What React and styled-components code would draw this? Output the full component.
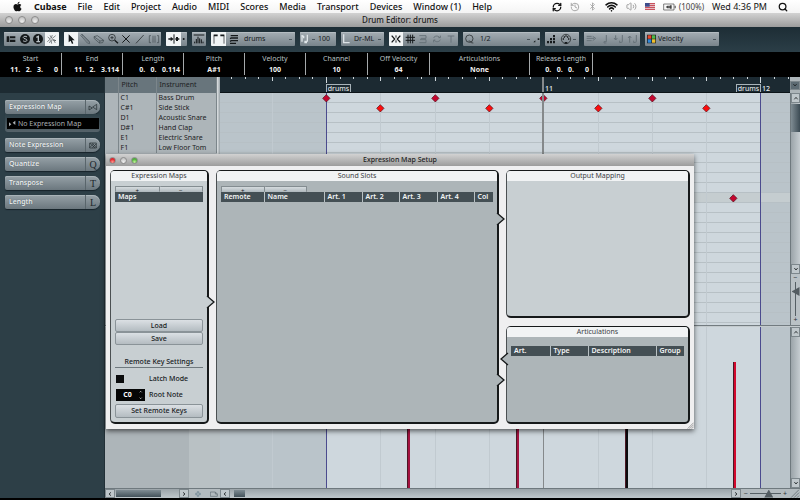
import styled, { createGlobalStyle, css } from "styled-components";
import { RefreshCw, History, Bluetooth, Wifi, Volume2, Search } from "lucide-react";
import { FaApple } from "react-icons/fa";

const GlobalStyle = createGlobalStyle`
  * {
    box-sizing: border-box;
  }
  body {
    margin: 0;
    background: #000;
  }
  body, button, input, select {
    font-family: "Noto Sans", "Open Sans", sans-serif;
    font-size: 7px;
    line-height: 10px;
  }
  button, input, select {
    margin: 0;
    padding: 0;
    border: 0;
    border-radius: 0;
    color: inherit;
    background: none;
    appearance: none;
  }
  svg {
    display: block;
    flex: none;
  }
`;

const Screen = styled.div`
  display: flex;
  flex-direction: column;
  min-height: 100vh;
  padding-bottom: 2px;
  overflow: hidden;
  background: #000;
`;

/* ---------- system menu ---------- */

const MenuBar = styled.nav`
  display: flex;
  align-items: center;
  gap: 11px;
  height: 13px;
  padding: 0 12px;
  color: #111;
  background: linear-gradient(#fff, #f4f4f4);
`;

const MenuItem = styled.button`
  font-size: 9px;
  line-height: 13px;
  white-space: nowrap;
  font-weight: ${(props) => (props.$strong ? 700 : 500)};
`;

const MenuStatus = styled.div`
  display: flex;
  align-items: center;
  gap: 8px;
  margin-left: auto;
  font-size: 9px;
  line-height: 13px;
  white-space: nowrap;
`;

const Battery = styled.span`
  display: flex;
  align-items: center;
  gap: 3px;
  font-size: 8px;
  color: #444;
`;

const TitleBar = styled.header`
  display: grid;
  grid-template-columns: 1fr auto 1fr;
  align-items: center;
  height: ${(props) => (props.$small ? 12 : 14)}px;
  padding: 0 ${(props) => (props.$small ? 3 : 5)}px;
  font-size: ${(props) => (props.$small ? 7 : 8)}px;
  font-weight: 500;
  color: #222;
  background: linear-gradient(#d2d2d2, #9c9c9c);
`;

const Lights = styled.div`
  display: flex;
  gap: ${(props) => (props.$small ? 4 : 5)}px;
`;

const lightColors = {
  red: "radial-gradient(circle at 50% 80%, #ff9a90, #e0252c 60%)",
  green: "radial-gradient(circle at 50% 80%, #c5f59a, #4fae3c 60%)",
  gray: "radial-gradient(circle at 50% 80%, #eee, #c6c6c6 70%)",
};

const Light = styled.button`
  width: ${(props) => (props.$small ? 7 : 8)}px;
  height: ${(props) => (props.$small ? 7 : 8)}px;
  border: 1px solid #8b8b8b;
  border-radius: 50%;
  background: ${(props) => lightColors[props.$color]};
`;

/* ---------- toolbar ---------- */

const Toolbar = styled.div`
  display: flex;
  gap: 5px;
  height: 25px;
  padding: 5px 4px 6px;
  background: linear-gradient(#1d2d35, #2b3e47);
`;

const ToolGroup = styled.div`
  display: flex;
  align-items: center;
  flex: none;
  width: ${(props) => props.$width}px;
  height: 14px;
  color: #15191b;
  border-radius: 1px;
  background: linear-gradient(#a4adb3, #79848b);
  box-shadow: inset 0 1px 0 #b4bcc1;
  overflow: hidden;
`;

const Tool = styled.button`
  display: flex;
  align-items: center;
  justify-content: center;
  flex: 1 1 0;
  height: 14px;
  color: ${(props) => (props.$dim ? "#68737a" : "#15191b")};
  ${(props) =>
    props.$on &&
    css`
      background: #f1f4f5;
    `}
`;

const ToolSelect = styled.select`
  flex: 1;
  min-width: 0;
  height: 14px;
  padding-left: 3px;
  line-height: 14px;
  color: #15191b;
`;

const Caret = styled.span`
  width: 3px;
  height: 1px;
  margin-right: 3px;
  background: #4a555c;
`;

/* ---------- info line ---------- */

const InfoLine = styled.dl`
  display: flex;
  height: 25px;
  margin: 0;
  padding: 1px 0 2px;
  background: #000;
`;

const InfoCell = styled.div`
  display: flex;
  flex-direction: column;
  width: ${(props) => props.$width}px;
  padding: 0 3px;
  border-right: 1px solid #a5a9ab;
  text-align: center;
  dt {
    line-height: 11px;
    color: #b9c0c4;
  }
  dd {
    margin: 0;
    line-height: 12px;
    font-weight: 700;
    color: #f2f2f2;
    white-space: pre;
    text-align: ${(props) => (props.$right ? "right" : "center")};
  }
`;

/* ---------- inspector ---------- */

const Main = styled.main`
  display: grid;
  grid-template-columns: 105px minmax(0, 1fr);
  flex: 1;
`;

const Inspector = styled.aside`
  display: flex;
  flex-direction: column;
  gap: 5px;
  padding: 23px 4px 0 5px;
  background: linear-gradient(#1d2b32 16px, #2d3f47 16px);
  border-right: 1px solid #223037;
`;

const Section = styled.button`
  display: flex;
  align-items: center;
  justify-content: space-between;
  width: 100%;
  height: 14px;
  padding: 0 0 0 4px;
  color: #f2f5f6;
  font-weight: 500;
  text-shadow: 0 0 1px #48545a;
  border-radius: 2px 7px 7px 2px;
  background: linear-gradient(#96a1a7, #6b777e);
  box-shadow: inset 0 1px 0 #a9b3b8, 0 1px 1px #17232a;
`;

const SectionIcon = styled.span`
  display: flex;
  align-items: center;
  justify-content: center;
  width: 15px;
  height: 14px;
  font: 10px "Liberation Serif", serif;
  color: #20282c;
  text-shadow: none;
  border-left: 1px solid #59656b;
`;

const SectionBody = styled.div`
  margin-bottom: 1px;
  padding: 4px 1px 3px 2px;
  border-radius: 0 0 3px 3px;
  background: linear-gradient(#2d3f47, #56636a);
`;

const MapName = styled.button`
  display: flex;
  align-items: center;
  width: 100%;
  height: 11px;
  padding-left: 1px;
  color: #a9aeb1;
  background: #000;
`;

/* ---------- editor ---------- */

const Editor = styled.section`
  position: relative;
  display: grid;
  grid-template-columns: 112px 3px minmax(0, 1fr) 10px;
  grid-template-rows: 16px minmax(232px, 1fr) 2px 161px 10px;
  background: #adb5b9;
`;

const DrumTable = styled.table`
  grid-column: 1;
  grid-row: 1 / 3;
  align-self: start;
  width: 100%;
  table-layout: fixed;
  border-collapse: collapse;
  color: #1c2123;
  th, td {
    height: 10px;
    padding: 0 0 0 2px;
    line-height: 10px;
    text-align: left;
    font-weight: 400;
    white-space: nowrap;
    border-right: 1px solid #7c868b;
  }
  th {
    height: 16px;
    padding-left: 3px;
    background: #68757c;
  }
`;

const Splitter = styled.div`
  grid-column: 2;
  grid-row: 1 / 3;
  background: linear-gradient(90deg, #dfe3e5, #99a2a7);
`;

const Ruler = styled.div`
  position: relative;
  grid-column: 3;
  grid-row: 1;
  overflow: hidden;
  background: #1c2a32;
  border-bottom: 1px solid #0c1418;
`;

const Mark = styled.span`
  position: absolute;
  bottom: -2px;
  font-weight: 500;
  color: #eef2f4;
`;

const PartTag = styled.span`
  position: absolute;
  bottom: -1px;
  width: 25px;
  height: 9px;
  line-height: 8px;
  text-align: center;
  color: #f1f4f5;
  border: 1px solid #a8b3b9;
  border-bottom: 0;
`;

const Tick = styled.i`
  position: absolute;
  top: 0;
  width: 1px;
  height: ${(props) => props.$size}px;
  background: #cfd6da;
`;

const Canvas = styled.div`
  position: relative;
  grid-column: 3;
  grid-row: ${(props) => props.$row};
  overflow: hidden;
  background: #bac4ca;
`;

const PartArea = styled.div`
  position: absolute;
  top: 0;
  bottom: 0;
  border: solid #4b4b8e;
  border-width: 0 1px;
  background: #ced7dd;
`;

const RowLines = styled.div`
  position: absolute;
  inset: 0;
  background: repeating-linear-gradient(transparent 0 9px, #b7c0c5 9px 10px);
`;

const RowHighlight = styled.div`
  position: absolute;
  top: 100px;
  width: 100%;
  height: 10px;
  background: #c5cdd0;
`;

const BeatLine = styled.i`
  position: absolute;
  top: 0;
  bottom: 0;
  width: 1px;
  background: #c1cad0;
`;

const Playhead = styled.i`
  position: absolute;
  top: 0;
  bottom: 0;
  width: ${(props) => (props.$thin ? 1 : 2)}px;
  background: #85898b;
`;

const Note = styled.svg`
  position: absolute;
  width: 9px;
  height: 9px;
`;

const VelocityBar = styled.i`
  position: absolute;
  bottom: 0;
  width: 3px;
  height: 126px;
  border-left: 1px solid #4b1724;
  background: ${(props) => props.$color};
`;

const Column = styled.div`
  grid-column: 4;
  grid-row: ${(props) => props.$row};
  display: flex;
  flex-direction: column;
  background: #b9c1c5;
  border-left: 1px solid #6f797e;
`;

const Track = styled.div`
  display: flex;
  flex-direction: ${(props) => (props.$vertical ? "column" : "row")};
  align-self: stretch;
  flex: 1;
  background: ${(props) =>
    props.$vertical
      ? "linear-gradient(90deg, #9ba4a9, #c5ccd0)"
      : "linear-gradient(#9ba4a9, #bfc7cb)"};
`;

const Thumb = styled.div`
  ${(props) =>
    props.$vertical
      ? css`
          height: ${props.$size}px;
          margin-top: 1px;
          background: linear-gradient(90deg, #7f8c93, #3c4b54);
        `
      : css`
          width: ${props.$size}px;
          margin: 1px 0 1px ${props.$offset || 0}px;
          background: linear-gradient(#7f8c93, #43525a);
        `}
`;

const ArrowButton = styled.button`
  display: flex;
  align-items: center;
  justify-content: center;
  flex: none;
  width: ${(props) => (props.$wide ? 10 : 9)}px;
  height: ${(props) => (props.$wide ? 9 : 10)}px;
  color: #1c2123;
  border: 1px solid #7d878c;
  background: #bfc7cb;
`;

const RulerMenu = styled(ArrowButton)`
  grid-column: 4;
  grid-row: 1;
  width: 10px;
  height: 9px;
  align-self: center;
  background: #5d6b73;
`;

const LaneDivider = styled.div`
  grid-column: 1 / 5;
  grid-row: 3;
  background: #727b80;
  border-bottom: 1px solid #c3cacd;
`;

const LaneHead = styled.div`
  grid-column: 1 / 3;
  grid-row: 4;
  background: linear-gradient(90deg, #adb5b9 84px, #b9c1c4 84px);
`;

const BottomBar = styled.div`
  grid-column: 1 / 5;
  grid-row: 5;
  display: flex;
  align-items: center;
  border-top: 1px solid #6f797e;
  background: #b3bbbf;
`;

const ListScroll = styled.div`
  display: flex;
  width: 84px;
  height: 9px;
`;

const BottomIcons = styled.div`
  display: flex;
  align-items: center;
  justify-content: space-between;
  width: 31px;
  padding: 0 2px 0 6px;
`;

const ZoomBox = styled.div`
  display: flex;
  align-items: center;
  gap: 2px;
  line-height: 8px;
  color: #2b3337;
  ${(props) =>
    props.$vertical
      ? css`
          flex-direction: column;
          height: 51px;
          gap: 0;
        `
      : css`
          width: 49px;
          padding: 0 3px;
        `}
`;

const ZoomSlider = styled.input`
  ${(props) =>
    props.$vertical
      ? css`
          width: 9px;
          height: 34px;
          writing-mode: vertical-lr;
          background: linear-gradient(#555f64, #555f64) center / 1px 100% no-repeat;
        `
      : css`
          flex: 1;
          min-width: 0;
          height: 9px;
          background: linear-gradient(#555f64, #555f64) center / 100% 1px no-repeat;
        `}
  &::-webkit-slider-thumb {
    appearance: none;
    width: ${(props) => (props.$vertical ? 8 : 9)}px;
    height: ${(props) => (props.$vertical ? 9 : 8)}px;
    background: #535c61;
    clip-path: ${(props) =>
      props.$vertical
        ? "polygon(0 50%, 100% 0, 100% 100%)"
        : "polygon(50% 0, 100% 100%, 0 100%)"};
  }
`;

/* ---------- expression map window ---------- */

const Dialog = styled.section`
  position: absolute;
  top: 77px;
  left: 1px;
  right: 106px;
  color: #15191b;
  background: #efeff0;
  box-shadow: 0 2px 5px rgba(0, 0, 0, 0.6);
`;

const DialogBody = styled.div`
  display: grid;
  grid-template-columns: 99px minmax(0, 1fr) 184px;
  grid-template-rows: 148px 98px;
  gap: 8px 7px;
  padding: 4px 4px 5px;
`;

const Panel = styled.section`
  position: relative;
  display: flex;
  flex-direction: column;
  grid-row: ${(props) => (props.$tall ? "1 / 3" : "auto")};
  border: 2px solid #16191a;
  border-left-color: #4b5052;
  border-left-width: 1px;
  border-top-width: 1px;
  border-radius: 5px;
  background: ${(props) => (props.$light ? "#c8cfd2" : "#adb5b8")};
  h2 {
    margin: 0 0 ${(props) => (props.$flush ? 9 : 5)}px;
    font-size: 7px;
    font-weight: 400;
    line-height: 10px;
    text-align: center;
    color: #3c4144;
    border-radius: 3px 3px 0 0;
    background: #f1f3f4;
  }
`;

const Pointer = styled.svg`
  position: absolute;
  top: ${(props) => props.$top}px;
  ${(props) => (props.$left ? "left: -7px;" : "right: -8px;")}
  width: 8px;
  height: 12px;
  overflow: visible;
`;

const AddRemove = styled.div`
  display: flex;
  width: ${(props) => props.$width}px;
  margin-left: 4px;
`;

const SmallButton = styled.button`
  flex: 1;
  height: 6px;
  font: 6px "Liberation Sans", sans-serif;
  line-height: 4px;
  border: 1px solid #848d91;
  border-bottom: 0;
  border-radius: 1px;
  background: linear-gradient(#d5dbde, #aeb7bc);
  & + & {
    border-left: 0;
  }
`;

const SlotTable = styled.table`
  width: ${(props) => props.$width}px;
  margin-left: 4px;
  table-layout: fixed;
  border-collapse: collapse;
  th {
    height: 10px;
    padding: 0 0 0 3px;
    line-height: 10px;
    text-align: left;
    font-weight: 600;
    white-space: nowrap;
    color: #f3f5f6;
    background: #444f54;
    border-right: 1px solid #b9c1c4;
  }
  th:last-child {
    border-right: 0;
  }
`;

const MapActions = styled.div`
  display: flex;
  flex-direction: column;
  margin: auto 4px 4px;
`;

const WideButton = styled.button`
  height: ${(props) => (props.$big ? 14 : 13)}px;
  font-weight: 500;
  border: 1px solid #8a9398;
  border-radius: 2px;
  background: linear-gradient(#dbe0e4, #b4bcc1);
`;

const SettingsTitle = styled.h3`
  margin: 12px 0 5px;
  font-size: 7px;
  font-weight: 500;
  line-height: 10px;
  text-align: center;
  border-bottom: 1px solid #6f797e;
`;

const Setting = styled.div`
  display: grid;
  grid-template-columns: 34px 1fr;
  align-items: center;
  height: ${(props) => props.$height}px;
  font-weight: 500;
`;

const LatchBox = styled.input`
  width: 8px;
  height: 8px;
  margin-left: 1px;
  background: #0a0c0d;
`;

const NoteField = styled.span`
  display: flex;
  align-items: center;
  width: 29px;
  height: 12px;
  margin-left: 1px;
  color: #fff;
  background: #050606;
  input {
    width: 23px;
    text-align: center;
    font-weight: 700;
    color: #fff;
  }
`;

const Grip = styled.svg`
  position: absolute;
  right: 0;
  bottom: 0;
`;

/* ---------- drawings ---------- */

// glyphs are drawn on a grid of three units per pixel
const Glyph = ({ w = 12, h = 12, stroke = 3, children }) => (
  <svg
    width={w}
    height={h}
    viewBox={`0 0 ${w * 3} ${h * 3}`}
    fill="none"
    stroke="currentColor"
    strokeWidth={stroke}
    aria-hidden="true"
  >
    {children}
  </svg>
);

const Arrow = ({ dir }) => {
  const d = {
    up: "M4 13l5-6 5 6",
    down: "M4 6l5 6 5-6",
    left: "M12 4l-6 5 6 5",
    right: "M6 4l6 5-6 5",
  };
  return (
    <Glyph w={6} h={6} stroke={2.5}>
      <path d={d[dir]} />
    </Glyph>
  );
};

const fillOnly = { fill: "currentColor", stroke: "none" };

const ICONS = {
  info: <path {...fillOnly} d="M5 10h8v17H5zM15 10h16v6H15zM15 20h16v7H15z" />,
  solo: (
    <>
      <circle {...fillOnly} cx="18" cy="18" r="15" />
      <path stroke="#bac2c7" d="M24 12c-4-4-12-2-11 2s10 3 11 7-8 6-12 2" />
    </>
  ),
  feedback: (
    <>
      <circle {...fillOnly} cx="18" cy="18" r="15" />
      <path stroke="#bac2c7" strokeWidth="4" d="M13 13l6-3v17M13 26h11" />
    </>
  ),
  spark: <path stroke="#4c5254" strokeWidth="2" d="M5 12l8 6-9 8M15 17l4-11M18 17l11-9M17 20l13 3-8-3 6 10M15 20l2 12M12 7l4 8M10 30l5-8" />,
  pointer: <path {...fillOnly} d="M11 4v24l6-5 4 10 4-2-4-9h8z" />,
  pencil: <path stroke="#4a545a" strokeWidth="2" d="M5 7l4-4 22 22 1 7-7-2zM8 10l4-4M10 8l20 20" />,
  eraser: <path stroke="#3d474c" strokeWidth="2" d="M3 11l10-3 19 14-3 7-10 1L4 17zM3 11l18 13 11-2M21 24l-2 6" />,
  zoom: (
    <>
      <circle cx="15" cy="14" r="10" strokeWidth="2" />
      <path strokeWidth="2" d="M15 9v10M10 14h10" />
      <path strokeWidth="4" d="M23 22l10 9" />
    </>
  ),
  mute: <path strokeWidth="3" d="M7 7l22 22M29 7L7 29" />,
  line: <path strokeWidth="2" d="M6 31L29 6" />,
  warp: <path stroke="#3d474c" strokeWidth="2" d="M9 8H4v21h5M15 8v21M21 8v21M27 8h5v21h-5" />,
  scroll: (
    <>
      <path strokeWidth="3" d="M18 4v28" />
      <path strokeWidth="5" d="M1 18h8M22 18h12" />
      <path {...fillOnly} d="M8 11l9 7-9 7zM24 12h6v12h-6z" />
    </>
  ),
  bars: <path strokeWidth="3" d="M2 6h32M5 31v-5M10 31v-13M15 31v-20M20 31v-15M25 31v-12M30 31v-5" />,
  part: (
    <>
      <path strokeWidth="2" d="M3 32V8M33 32V8" />
      <path strokeWidth="5" d="M2 7h12M22 7h12" />
    </>
  ),
  layers: <path strokeWidth="4" d="M8 8h22M6 17l4-2h20M6 25l4-2h20M6 31h18" />,
  noteVel: <path stroke="#dfe5e8" strokeWidth="4" d="M6 6v20M6 8l5 2v6M22 5v21M21 25h-6v4h6" />,
  length: <path stroke="#dde3e6" strokeWidth="4" d="M8 4v25h18" />,
  snap: (
    <>
      <path strokeWidth="4" d="M5 8l9 10-9 10M31 8l-9 10 9 10" />
      <path strokeWidth="3" d="M18 7v7M18 22v7" />
    </>
  ),
  grid: <path strokeWidth="3" d="M12 5v26M19 5v26M26 5v26M5 13h28M5 22h28" />,
  snapType: <path strokeWidth="3" d="M7 8h20v8H11M9 20h18v9H7" />,
  loop: <path strokeWidth="3" d="M8 15c2-7 14-8 18-1M28 20c-3 8-15 8-19 1M22 14h6V8M13 21H8v7" />,
  tee: <path strokeWidth="3" d="M8 9h20M18 9v20" />,
  steps: <path {...fillOnly} d="M3 24h6v7H3zM12 24h6v7h-6zM12 15h6v7h-6zM21 24h6v7h-6zM21 15h6v7h-6zM21 6h6v7h-6z" />,
  midi: (
    <>
      <circle cx="18" cy="18" r="14" strokeWidth="2" />
      <path {...fillOnly} d="M8 16h4v4H8zM24 16h4v4h-4zM11 10h4v4h-4zM21 10h4v4h-4zM16 7h4v4h-4zM14 27h8v5h-8z" />
    </>
  ),
  step: <path strokeWidth="3" d="M5 10h15M5 16h22M23 10l9 6-9 7M5 23h15" />,
  quarter: <path strokeWidth="3" d="M22 6v20h-7v4h7" />,
  noteDown: <path strokeWidth="3" d="M8 7v14M3 15l5 6 5-6M28 6v20M28 27l-8 2v-6" />,
  noteUp: <path strokeWidth="3" d="M8 29V9M3 15l5-6 5 6M28 6v20M28 27l-8 2v-6" />,
};

const Icon = ({ name }) => <Glyph>{ICONS[name]}</Glyph>;

const MapIcon = () => (
  <Glyph w={10} h={8} stroke={2}>
    <path d="M3 21V9l10 6zM26 4v16L14 12z" />
  </Glyph>
);

const SlotIcon = () => (
  <Glyph w={10} h={9}>
    <path {...fillOnly} d="M3 22V10l7 6zM22 5v13l-8-7z" />
  </Glyph>
);

const Diamond = ({ x, y, color }) => (
  <Note style={{ left: x - 4, top: y - 4 }} viewBox="0 0 27 27">
    <path d="M13 2l11 11-11 11L2 13z" fill={color} stroke="#4d0b16" strokeWidth="2" />
  </Note>
);

const Point = ({ top, left, fill }) => (
  <Pointer $top={top} $left={left} viewBox="0 0 8 12">
    <path
      d={left ? "M8 0L1 6l7 6" : "M0 0l7 6-7 6"}
      fill={fill}
      stroke="#16191a"
      strokeWidth="1.3"
    />
  </Pointer>
);

/* ---------- data ---------- */

const MENUS = ["File", "Edit", "Project", "Audio", "MIDI", "Scores", "Media", "Transport", "Devices", "Window (1)", "Help"];

const INFO = [
  { label: "Start", value: "11.   2.   3.      0", width: 62, right: true },
  { label: "End", value: "11.   2.   3.114", width: 61, right: true },
  { label: "Length", value: "0.   0.   0.114", width: 61, right: true },
  { label: "Pitch", value: "A#1", width: 61 },
  { label: "Velocity", value: "100", width: 61 },
  { label: "Channel", value: "10", width: 62 },
  { label: "Off Velocity", value: "64", width: 62 },
  { label: "Articulations", value: "None", width: 100 },
  { label: "Release Length", value: "0.   0.   0.      0", width: 63, right: true },
];

const DRUMS = [
  ["C1", "Bass Drum"],
  ["C#1", "Side Stick"],
  ["D1", "Acoustic Snare"],
  ["D#1", "Hand Clap"],
  ["E1", "Electric Snare"],
  ["F1", "Low Floor Tom"],
];

const DARK = "#c4062f";
const BRIGHT = "#fb0d0d";

// beat is counted in eighths from the start of the part
const NOTES = [
  [0, 0, DARK], [4, 0, DARK], [8, 0, DARK], [12, 0, DARK],
  [2, 1, BRIGHT], [6, 1, BRIGHT], [10, 1, BRIGHT], [14, 1, BRIGHT],
  [1, 6, DARK], [5, 6, DARK], [9, 6, DARK], [13, 6, DARK],
  [15, 10, DARK],
];

const VELOCITIES = [
  [3, "#a3123f"],
  [7, "#a3123f"],
  [11, "#0b0b0d"],
  [15, "#d3082d"],
];

const PART_START = 106;
const xOf = (eighth) => Math.round(PART_START + eighth * 27.15);
const partStyle = { left: xOf(0), width: xOf(16) - xOf(0) + 1 };

const SLOTS = [["Remote", 43], ["Name", 60], ["Art. 1", 38], ["Art. 2", 37], ["Art. 3", 38], ["Art. 4", 37], ["Col", 19]];
const ARTS = [["Art.", 39], ["Type", 38], ["Description", 68], ["Group", 28]];

const HeadTable = ({ columns }) => (
  <SlotTable $width={columns.reduce((sum, c) => sum + c[1], 0)}>
    <colgroup>
      {columns.map(([name, width]) => (
        <col key={name} style={{ width }} />
      ))}
    </colgroup>
    <thead>
      <tr>
        {columns.map(([name]) => (
          <th key={name}>{name}</th>
        ))}
      </tr>
    </thead>
  </SlotTable>
);

const WindowLights = ({ colors, small }) => (
  <Lights $small={small}>
    {colors.map((color, i) => (
      <Light key={i} $small={small} $color={color} aria-label={["Close", "Minimize", "Zoom"][i]} />
    ))}
  </Lights>
);

const Tools = ({ names, on = [], dim = [] }) =>
  names.map((name) => (
    <Tool key={name} $on={on.includes(name)} $dim={dim.includes(name)} aria-label={name}>
      <Icon name={name} />
    </Tool>
  ));

const SystemMenu = () => (
  <MenuBar>
    <FaApple size={11} />
    <MenuItem $strong>Cubase</MenuItem>
    {MENUS.map((name) => (
      <MenuItem key={name}>{name}</MenuItem>
    ))}
    <MenuStatus>
      <RefreshCw size={10} strokeWidth={3} />
      <History size={10} color="#999" />
      <Bluetooth size={9} color="#999" />
      <Wifi size={13} strokeWidth={3} />
      <Volume2 size={11} color="#999" />
      <svg width="10" height="7" viewBox="0 0 30 21">
        <path fill="#e9d6da" d="M0 0h30v21H0z" />
        <path stroke="#c33a48" strokeWidth="3" d="M0 2h30M0 8h30M0 14h30M0 20h30" />
        <path fill="#3c4c8c" d="M0 0h14v11H0z" />
      </svg>
      <Battery>
        <Glyph w={13} h={8} stroke={2}>
          <path d="M2 3h31v18H2z" />
          <path {...fillOnly} d="M35 8h3v8h-3zM8 12l8-5v3h4V7h6v10h-6v-3h-4v3z" />
        </Glyph>
        (100%)
      </Battery>
      <span>Wed 4:36 PM</span>
      <Search size={10} strokeWidth={3} style={{ marginLeft: 3 }} />
    </MenuStatus>
  </MenuBar>
);

const MainToolbar = () => (
  <Toolbar>
    <ToolGroup $width={55}>
      <Tools names={["info", "solo", "feedback", "spark"]} on={["spark"]} />
    </ToolGroup>
    <ToolGroup $width={97}>
      <Tools names={["pointer", "pencil", "eraser", "zoom", "mute", "line", "warp"]} on={["pointer"]} />
    </ToolGroup>
    <ToolGroup $width={21}>
      <Tools names={["scroll"]} on={["scroll"]} />
      <Glyph w={6}>
        <circle {...fillOnly} cx="8" cy="18" r="3" />
      </Glyph>
    </ToolGroup>
    <ToolGroup $width={14}>
      <Tools names={["bars"]} />
    </ToolGroup>
    <ToolGroup $width={84}>
      <Tools names={["part"]} on={["part"]} />
      <Tools names={["layers"]} />
      <ToolSelect aria-label="Part" style={{ flexGrow: 3 }}>
        <option>drums</option>
      </ToolSelect>
      <Caret />
    </ToolGroup>
    <ToolGroup $width={36}>
      <Icon name="noteVel" />
      <Caret />
      <span>100</span>
    </ToolGroup>
    <ToolGroup $width={43}>
      <Icon name="length" />
      <ToolSelect aria-label="Drum map length" style={{ paddingLeft: 1 }}>
        <option>Dr-ML</option>
      </ToolSelect>
      <Caret />
    </ToolGroup>
    <ToolGroup $width={69}>
      <Tools names={["snap", "grid", "snapType", "loop", "tee"]} on={["snap"]} dim={["snapType", "loop", "tee"]} />
    </ToolGroup>
    <ToolGroup $width={77}>
      <Glyph w={14}>
        <circle cx="19" cy="17" r="11" strokeWidth="2" />
        <path strokeWidth="2" d="M17 24c4-2 6 7 14 6" />
      </Glyph>
      <ToolSelect aria-label="Quantize">
        <option>1/2</option>
      </ToolSelect>
      <Caret />
      <Glyph w={7}>
        <path {...fillOnly} d="M1 28l6-6v6zM14 16h5v5h-5z" />
      </Glyph>
    </ToolGroup>
    <ToolGroup $width={34}>
      <Tools names={["steps", "midi"]} />
      <Caret />
    </ToolGroup>
    <ToolGroup $width={56}>
      <Tools names={["step", "quarter", "noteDown", "noteUp"]} dim={["step", "quarter", "noteDown", "noteUp"]} />
    </ToolGroup>
    <ToolGroup $width={74}>
      <Glyph w={12}>
        <path {...fillOnly} d="M6 5h27v26H6z" />
        <path stroke="none" fill="#e8472b" d="M8 7h11v10H8z" />
        <path stroke="none" fill="#4fb84a" d="M21 7h10v10H21z" />
        <path stroke="none" fill="#2f87d8" d="M8 19h11v10H8z" />
        <path stroke="none" fill="#f0c02c" d="M21 19h10v10H21z" />
      </Glyph>
      <ToolSelect aria-label="Event colors" style={{ paddingLeft: 1 }}>
        <option>Velocity</option>
      </ToolSelect>
      <Caret />
    </ToolGroup>
  </Toolbar>
);

const SideSection = ({ label, children }) => (
  <Section>
    {label}
    <SectionIcon>{children}</SectionIcon>
  </Section>
);

const InspectorPanel = () => (
  <Inspector>
    <div>
      <SideSection label="Expression Map">
        <MapIcon />
      </SideSection>
      <SectionBody>
        <MapName>
          <SlotIcon />
          No Expression Map
        </MapName>
      </SectionBody>
    </div>
    <SideSection label="Note Expression">
      <Glyph w={8} h={7} stroke={2}>
        <path d="M2 3h20v15H2zM3 4l15 14M10 4l11 12M3 16L14 5M10 17L21 6" />
      </Glyph>
    </SideSection>
    <SideSection label="Quantize">Q</SideSection>
    <SideSection label="Transpose">T</SideSection>
    <SideSection label="Length">L</SideSection>
  </Inspector>
);

const TimeRuler = () => (
  <Ruler>
    {Array.from({ length: 43 }, (_, i) => i - 8).map((i) => (
      <Tick
        key={i}
        $size={i % 16 === 0 ? 6 : i % 4 === 0 ? 4 : 2}
        style={{ left: xOf(i / 2) }}
      />
    ))}
    <PartTag style={{ left: xOf(0) }}>drums</PartTag>
    <Mark style={{ left: xOf(8) + 2 }}>11</Mark>
    <PartTag style={{ left: xOf(16) - 24 }}>drums</PartTag>
    <Mark style={{ left: xOf(16) + 2 }}>12</Mark>
    <Playhead style={{ left: xOf(8) - 1 }} />
  </Ruler>
);

const BeatLines = () =>
  [-2, 2, 4, 6, 10, 12, 14].map((e) => <BeatLine key={e} style={{ left: xOf(e) }} />);

const ExpressionMapSetup = () => (
  <Dialog aria-label="Expression Map Setup">
    <TitleBar $small>
      <WindowLights small colors={["red", "gray", "green"]} />
      <span>Expression Map Setup</span>
    </TitleBar>
    <DialogBody>
      <Panel $tall $light>
        <h2>Expression Maps</h2>
        <AddRemove $width={88}>
          <SmallButton>+</SmallButton>
          <SmallButton>−</SmallButton>
        </AddRemove>
        <HeadTable columns={[["Maps", 88]]} />
        <MapActions>
          <WideButton>Load</WideButton>
          <WideButton>Save</WideButton>
          <SettingsTitle>Remote Key Settings</SettingsTitle>
          <Setting $height={12}>
            <LatchBox type="checkbox" id="latch" />
            <label htmlFor="latch">Latch Mode</label>
          </Setting>
          <Setting $height={19}>
            <NoteField>
              <input id="root-note" defaultValue="C0" />
              <Glyph w={4} h={10} stroke={2}>
                <path d="M2 7l3-3 3 3M2 23l3 3 3-3" />
              </Glyph>
            </NoteField>
            <label htmlFor="root-note">Root Note</label>
          </Setting>
          <WideButton $big>Set Remote Keys</WideButton>
        </MapActions>
        <Point top={125} fill="#c8cfd2" />
      </Panel>
      <Panel $tall>
        <h2>Sound Slots</h2>
        <AddRemove $width={86}>
          <SmallButton>+</SmallButton>
          <SmallButton>−</SmallButton>
        </AddRemove>
        <HeadTable columns={SLOTS} />
        <Point top={42} fill="#adb5b8" />
        <Point top={203} fill="#adb5b8" />
      </Panel>
      <Panel $light>
        <h2>Output Mapping</h2>
      </Panel>
      <Panel $flush>
        <h2>Articulations</h2>
        <HeadTable columns={ARTS} />
        <Point left top={26} fill="#adb5b8" />
      </Panel>
    </DialogBody>
    <Grip width="7" height="7" viewBox="0 0 21 21">
      <path d="M2 20L20 2M8 20L20 8M14 20l6-6" stroke="#777" strokeWidth="2" />
    </Grip>
  </Dialog>
);

const DrumEditor = () => (
  <Editor>
    <DrumTable>
      <colgroup>
        <col style={{ width: 13 }} />
        <col style={{ width: 38 }} />
        <col />
      </colgroup>
      <thead>
        <tr>
          <th aria-label="Audition" />
          <th>Pitch</th>
          <th>Instrument</th>
        </tr>
      </thead>
      <tbody>
        {DRUMS.map(([pitch, name]) => (
          <tr key={pitch}>
            <td />
            <td>{pitch}</td>
            <td>{name}</td>
          </tr>
        ))}
      </tbody>
    </DrumTable>
    <Splitter />
    <TimeRuler />
    <RulerMenu aria-label="Ruler format">
      <Arrow dir="down" />
    </RulerMenu>

    <Canvas $row={2}>
      <PartArea style={partStyle} />
      <RowHighlight />
      <RowLines />
      <BeatLines />
      <PartArea style={{ ...partStyle, background: "none" }} />
      {NOTES.map(([eighth, row, color]) => (
        <Diamond key={`${eighth}-${row}`} x={xOf(eighth)} y={row * 10 + 5} color={color} />
      ))}
      <Playhead style={{ left: xOf(8) - 1 }} />
    </Canvas>
    <Column $row={2}>
      <ArrowButton aria-label="Scroll up">
        <Arrow dir="up" />
      </ArrowButton>
      <Track $vertical>
        <Thumb $vertical $size={28} />
      </Track>
      <ArrowButton aria-label="Scroll down">
        <Arrow dir="down" />
      </ArrowButton>
      <ZoomBox $vertical>
        −
        <ZoomSlider $vertical type="range" defaultValue="20" aria-label="Vertical zoom" />
        +
      </ZoomBox>
    </Column>

    <LaneDivider />
    <LaneHead />
    <Canvas $row={4}>
      <PartArea style={partStyle} />
      <BeatLines />
      {VELOCITIES.map(([eighth, color]) => (
        <VelocityBar key={eighth} $color={color} style={{ left: xOf(eighth) }} />
      ))}
      <Playhead $thin style={{ left: xOf(8) }} />
    </Canvas>
    <Column $row={4}>
      <ArrowButton aria-label="Lane up">
        <Arrow dir="up" />
      </ArrowButton>
      <Track $vertical />
      <ArrowButton aria-label="Lane down">
        <Arrow dir="down" />
      </ArrowButton>
    </Column>

    <BottomBar>
      <ListScroll>
        <ArrowButton $wide aria-label="List left">
          <Arrow dir="left" />
        </ArrowButton>
        <Track>
          <Thumb $size={45} $offset={1} />
        </Track>
        <ArrowButton $wide aria-label="List right">
          <Arrow dir="right" />
        </ArrowButton>
      </ListScroll>
      <BottomIcons>
        <Glyph w={6} h={6} stroke={2}>
          <path stroke="#66808e" d="M7 2h4v5h5v4h-5v5H7v-5H2V7h5z" />
        </Glyph>
        <Glyph w={8} h={6} stroke={2}>
          <path stroke="#5d6a71" d="M1 3h15l6 6v7H1zM16 3v6h6" />
        </Glyph>
      </BottomIcons>
      <ArrowButton $wide aria-label="Scroll left">
        <Arrow dir="left" />
      </ArrowButton>
      <Track>
        <Thumb $size={11} $offset={4} />
      </Track>
      <ArrowButton $wide aria-label="Scroll right">
        <Arrow dir="right" />
      </ArrowButton>
      <ZoomBox>
        −
        <ZoomSlider type="range" defaultValue="65" aria-label="Horizontal zoom" />
        +
      </ZoomBox>
      <Glyph w={10} h={9} stroke={2}>
        <path stroke="#555f64" d="M3 26L27 2M12 26l15-15M21 26l6-6" />
      </Glyph>
    </BottomBar>

    <ExpressionMapSetup />
  </Editor>
);

const App = () => (
  <Screen>
    <GlobalStyle />
    <SystemMenu />
    <TitleBar>
      <WindowLights colors={["gray", "gray", "gray"]} />
      <span>Drum Editor: drums</span>
    </TitleBar>
    <MainToolbar />
    <InfoLine>
      {INFO.map((item) => (
        <InfoCell key={item.label} $width={item.width} $right={item.right}>
          <dt>{item.label}</dt>
          <dd>{item.value}</dd>
        </InfoCell>
      ))}
    </InfoLine>
    <Main>
      <InspectorPanel />
      <DrumEditor />
    </Main>
  </Screen>
);

export default App;
